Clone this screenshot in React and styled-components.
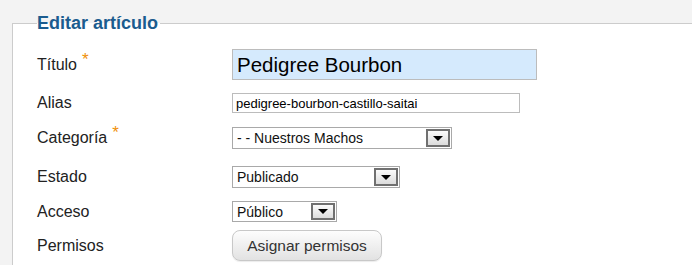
import React from "react";
import styled, { createGlobalStyle } from "styled-components";

const GlobalStyle = createGlobalStyle`
  body {
    margin: 0;
    background: #f3f3f3;
    font-family: "Liberation Sans", Arial, sans-serif;
    overflow: hidden;
  }
`;

const Fieldset = styled.fieldset`
  margin: 14px 0 0 12px;
  width: 780px;
  min-height: 300px;
  padding: 0 0 0 24px;
  border: 1px solid #cccccc;
  background: #ffffff;
  box-sizing: border-box;
`;

const Legend = styled.legend`
  padding: 0 2px 0 0;
  font-size: 18px;
  line-height: 18px;
  font-weight: 700;
  color: #1b5c8f;
`;

const Row = styled.div`
  display: flex;
  align-items: center;
  margin-top: ${(p) => p.$top}px;
`;

const Label = styled.label`
  width: 195px;
  flex-shrink: 0;
  font-size: 16px;
  color: #222222;
`;

const Star = styled.span`
  color: #f0900a;
  font-size: 17px;
  margin-left: 5px;
  position: relative;
  top: -5px;
`;

const TextInput = styled.input`
  box-sizing: border-box;
  width: ${(p) => p.$w}px;
  height: ${(p) => p.$h}px;
  padding: 0 0 0 ${(p) => (p.$big ? 4 : 3)}px;
  font-family: "Liberation Sans", Arial, sans-serif;
  font-size: ${(p) => (p.$big ? 20.5 : 13)}px;
  color: #000000;
  border: 1px solid #bcbcbc;
  background: ${(p) => (p.$big ? "#d5eafd" : "#ffffff")};
  outline: none;
`;

const Select = styled.div`
  box-sizing: border-box;
  width: ${(p) => p.$w}px;
  height: ${(p) => p.$h}px;
  display: flex;
  align-items: center;
  justify-content: space-between;
  border: 1px solid #a9a9a9;
  background: #ffffff;
  padding: 0 1px 0 4px;
  font-size: 14px;
  color: #111111;
`;

const Arrow = styled.span`
  box-sizing: border-box;
  width: 24px;
  height: ${(p) => p.$h - 4}px;
  border: 2px solid #707070;
  background: linear-gradient(#fbfbfb, #dcdcdc);
  display: flex;
  align-items: center;
  justify-content: center;

  &::after {
    content: "";
    border-left: 5px solid transparent;
    border-right: 5px solid transparent;
    border-top: 5px solid #000000;
  }
`;

const Button = styled.button`
  box-sizing: border-box;
  width: 150px;
  height: 31px;
  border: 1px solid #c8c8c8;
  border-radius: 8px;
  background: linear-gradient(#fdfdfd, #e2e2e2);
  box-shadow: 0 1px 1px rgba(0, 0, 0, 0.08);
  font-family: "Liberation Sans", Arial, sans-serif;
  font-size: 15.5px;
  color: #333333;
  padding: 0;
`;

const Dropdown = ({ value, w, h }) => (
  <Select $w={w} $h={h}>
    <span>{value}</span>
    <Arrow $h={h} />
  </Select>
);

export default function App() {
  return (
    <>
      <GlobalStyle />
      <Fieldset>
        <Legend>Editar artículo</Legend>
        <Row $top={17}>
          <Label>
            Título<Star>*</Star>
          </Label>
          <TextInput $big $w={305} $h={31} defaultValue="Pedigree Bourbon" readOnly />
        </Row>
        <Row $top={13}>
          <Label>Alias</Label>
          <TextInput $w={288} $h={20} defaultValue="pedigree-bourbon-castillo-saitai" readOnly />
        </Row>
        <Row $top={14}>
          <Label>
            Categoría<Star>*</Star>
          </Label>
          <Dropdown value="- - Nuestros Machos" w={220} h={22} />
        </Row>
        <Row $top={17}>
          <Label>Estado</Label>
          <Dropdown value="Publicado" w={168} h={22} />
        </Row>
        <Row $top={13}>
          <Label>Acceso</Label>
          <Dropdown value="Público" w={105} h={21} />
        </Row>
        <Row $top={8}>
          <Label>Permisos</Label>
          <Button>Asignar permisos</Button>
        </Row>
      </Fieldset>
    </>
  );
}
